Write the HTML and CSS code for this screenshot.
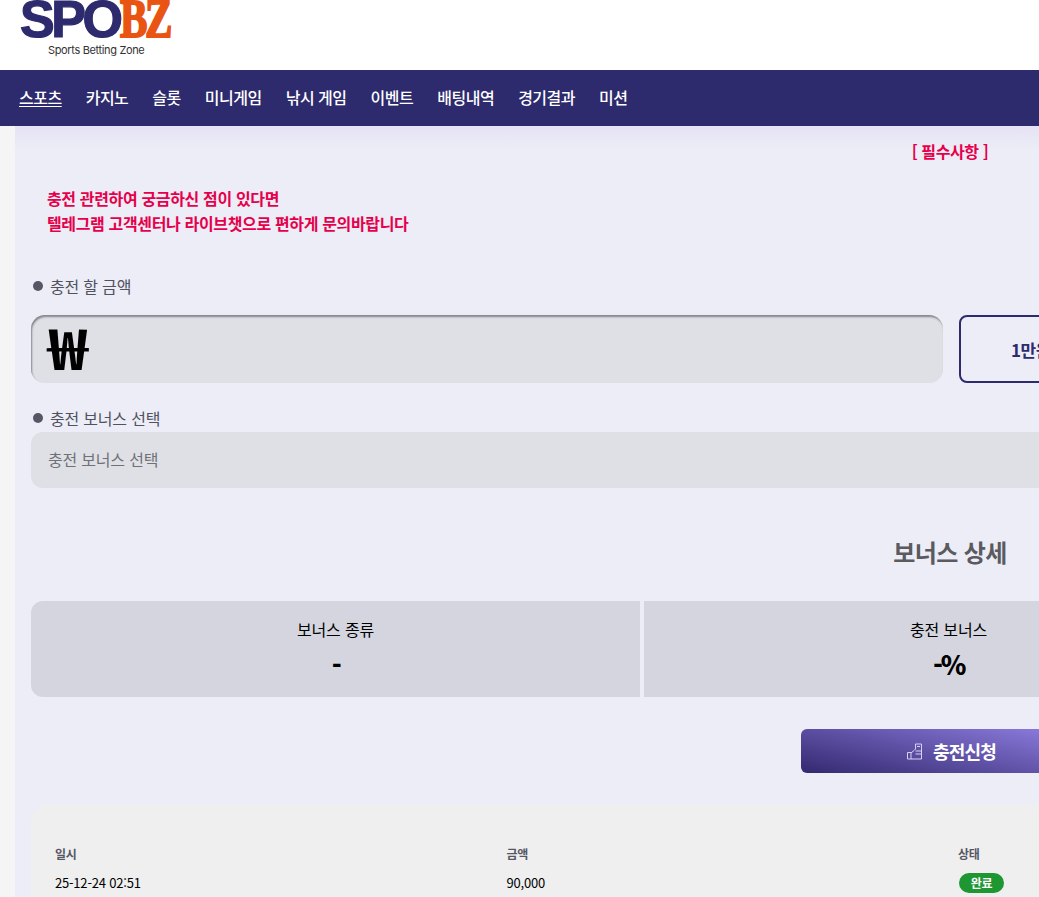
FILE: index.html
```html
<!DOCTYPE html>
<html lang="ko">
<head>
  <meta charset="UTF-8">
  <title>SPOBZ - 충전</title>
  <link rel="stylesheet" href="styles.css">
</head>
<body>

  <header class="top">
    <a class="logo" href="#">
      <span class="logo-word"><span class="logo-spo">SPO</span><span class="logo-bz">BZ</span></span>
      <span class="logo-sub">Sports Betting Zone</span>
    </a>
  </header>

  <nav class="nav">
    <a href="#">스포츠</a>
    <a href="#">카지노</a>
    <a href="#">슬롯</a>
    <a href="#">미니게임</a>
    <a href="#">낚시 게임</a>
    <a href="#">이벤트</a>
    <a href="#">배팅내역</a>
    <a href="#">경기결과</a>
    <a href="#">미션</a>
  </nav>

  <div class="layout">
    <div class="side"></div>
    <main class="main">
      <h3 class="notice-title">[ 필수사항 ]</h3>
      <p class="notice">충전 관련하여 궁금하신 점이 있다면<br>텔레그램 고객센터나 라이브챗으로 편하게 문의바랍니다</p>

      <label class="label label-amount"><span class="dot"></span>충전 할 금액</label>
      <div class="amount-row">
        <div class="amount-input"><span class="won">₩</span></div>
        <button class="amount-btn">1만원</button>
        <button class="amount-btn">5만원</button>
        <button class="amount-btn">10만원</button>
        <button class="amount-btn">50만원</button>
        <button class="amount-btn">100만원</button>
      </div>

      <label class="label label-bonus"><span class="dot"></span>충전 보너스 선택</label>
      <div class="bonus-select">충전 보너스 선택</div>

      <h2 class="bonus-title">보너스 상세</h2>
      <div class="bonus-grid">
        <div class="bonus-cell"><span>보너스 종류</span><strong>-</strong></div>
        <div class="bonus-cell"><span>충전 보너스</span><strong>-%</strong></div>
        <div class="bonus-cell"><span>최대 보너스</span><strong>-</strong></div>
      </div>

      <div class="submit-row">
        <button class="submit">
          <svg class="thumb" width="16" height="17" viewBox="0 0 16 17" fill="none" stroke="#d8d2f2" stroke-width="1">
            <path d="M0.5 9.5h3.5v6.5h-3.5z"/>
            <path d="M4 10l3-2.5 1.5-1.5v-5h6v15h-10.5"/>
            <path d="M10 3.5h3M8.5 8h6M8.5 11h6"/>
          </svg>
          충전신청
        </button>
      </div>

      <section class="history">
        <div class="history-row history-head">
          <div>일시</div><div>금액</div><div>상태</div><div></div>
        </div>
        <div class="history-row history-item">
          <div>25-12-24 02:51</div><div>90,000</div><div><span class="badge">완료</span></div><div></div>
        </div>
      </section>
    </main>
  </div>

</body>
</html>
```

FILE: styles.css
```css
html, body {
  margin: 0;
  height: 897px;
  overflow: hidden;
}

body {
  width: 1885px;
  background: #ecedf6;
  font-family: "Noto Sans CJK KR", "Noto Sans", sans-serif;
  color: #000;
}

.top {
  height: 70px;
  background: #fff;
  overflow: hidden;
}

.logo {
  display: block;
  width: 155px;
  margin-left: 20px;
  text-decoration: none;
}

.logo-word {
  display: block;
  height: 42px;
  margin-top: -5px;
  font-family: "Liberation Sans", sans-serif;
  font-weight: 700;
  font-size: 52px;
  line-height: 48px;
  letter-spacing: -3.4px;
  white-space: nowrap;
}

.logo-spo {
  color: #2d2a6e;
  -webkit-text-stroke: 1.2px #2d2a6e;
}

.logo-bz {
  display: inline-block;
  color: #ea5413;
  font-family: "Liberation Serif", serif;
  font-size: 54px;
  -webkit-text-stroke: 2px #ea5413;
  letter-spacing: -3px;
  transform: scaleX(0.76);
  transform-origin: left;
}

.logo-sub {
  display: block;
  margin: 7px 0 0 28px;
  font-family: "Inter", sans-serif;
  font-size: 11px;
  line-height: 12px;
  letter-spacing: -0.35px;
  color: #333;
  white-space: nowrap;
}

.nav {
  height: 56px;
  display: flex;
  align-items: center;
  gap: 24px;
  padding-left: 19px;
  padding-bottom: 2px;
  box-sizing: border-box;
  background: #2d2a6e;
}

.nav a {
  color: #fff;
  font-size: 16px;
  font-weight: 500;
  letter-spacing: -0.5px;
  text-decoration: none;
  white-space: nowrap;
}

.nav a:first-child {
  text-decoration: underline;
  text-underline-offset: 2px;
}

.layout {
  display: flex;
}

.side {
  flex: 0 0 15px;
  background: #f5f5f5;
  height: 771px;
}

.main {
  flex: 1;
  min-width: 0;
  padding: 0 16px;
  background: linear-gradient(#e6e3f5, #ecedf6 24px);
  height: 771px;
}

.notice-title {
  margin: 0;
  padding-top: 14px;
  text-align: center;
  font-size: 16px;
  line-height: 22px;
  font-weight: 700;
  letter-spacing: -0.4px;
  color: #e6004c;
}

.notice {
  margin: 24px 0 0 16px;
  font-size: 16px;
  line-height: 25px;
  font-weight: 700;
  letter-spacing: -0.35px;
  color: #e6004c;
}

.label {
  display: flex;
  align-items: center;
  font-size: 16px;
  line-height: 22px;
  letter-spacing: -0.2px;
  color: #50525f;
}

.label-amount {
  margin-top: 39px;
}

.label-bonus {
  margin-top: 24px;
}

.dot {
  width: 10px;
  height: 10px;
  margin: 0 7px 0 2px;
  border-radius: 50%;
  background: #555766;
}

.amount-row {
  display: flex;
  gap: 16px;
  margin-top: 18px;
}

.amount-input {
  flex: 0 0 912px;
  box-sizing: border-box;
  height: 68px;
  padding-left: 17px;
  background: #dee0e5;
  border-radius: 14px;
  box-shadow: inset 1px 2px 2px #85868b;
  line-height: 62px;
  overflow: hidden;
}

.won {
  display: inline-block;
  font-size: 56px;
  font-weight: 700;
  transform: scaleX(1.2);
  transform-origin: left;
}

.amount-btn {
  flex: 0 0 144px;
  height: 68px;
  background: transparent;
  border: 2px solid #2d2a6e;
  border-radius: 8px;
  color: #2d2a6e;
  font-family: inherit;
  font-size: 17px;
  font-weight: 700;
  letter-spacing: -0.4px;
}

.bonus-select {
  height: 56px;
  margin-top: 3px;
  padding-left: 17px;
  background: #dee0e5;
  border-radius: 12px;
  font-size: 16px;
  line-height: 54px;
  letter-spacing: -0.2px;
  color: #6f7177;
}

.bonus-title {
  margin: 46px 0 0;
  text-align: center;
  font-size: 24px;
  line-height: 36px;
  font-weight: 700;
  letter-spacing: -0.6px;
  color: #5a5a5f;
}

.bonus-grid {
  display: grid;
  grid-template-columns: repeat(3, 1fr);
  gap: 4px;
  margin: 31px 3px 0 0;
  border-radius: 12px;
  overflow: hidden;
}

.bonus-cell {
  height: 96px;
  display: flex;
  flex-direction: column;
  align-items: center;
  background: #d4d5de;
}

.bonus-cell span {
  margin-top: 16px;
  font-size: 16px;
  line-height: 24px;
  letter-spacing: -0.2px;
}

.bonus-cell strong {
  margin-top: 5px;
  font-size: 26px;
  line-height: 36px;
  font-weight: 900;
  letter-spacing: -2.4px;
}

.submit-row {
  display: flex;
  justify-content: center;
  margin-top: 32px;
}

.submit {
  display: flex;
  align-items: center;
  justify-content: center;
  gap: 10px;
  width: 298px;
  height: 44px;
  padding: 0 0 0 3px;
  border: 0;
  border-radius: 6px;
  background: linear-gradient(12deg, #33296f, #9483e8);
  color: #fff;
  font-family: inherit;
  font-size: 18px;
  font-weight: 700;
  letter-spacing: -0.8px;
}

.history {
  margin-top: 31px;
  padding: 37px 24px 0;
  height: 120px;
  background: #efefef;
  border-radius: 18px 18px 0 0;
}

.history-row {
  display: grid;
  grid-template-columns: 451.5px 451.5px 451.5px 1fr;
  align-items: center;
  font-size: 13px;
  line-height: 26px;
  letter-spacing: -0.2px;
}

.history-head {
  font-size: 12px;
  font-weight: 700;
  color: #555766;
}

.history-item {
  margin-top: 3px;
}

.badge {
  display: block;
  width: 45px;
  height: 20px;
  margin-left: 1px;
  border-radius: 10px;
  background: #1e9632;
  color: #fff;
  font-size: 12px;
  font-weight: 700;
  line-height: 20px;
  text-align: center;
}
```
